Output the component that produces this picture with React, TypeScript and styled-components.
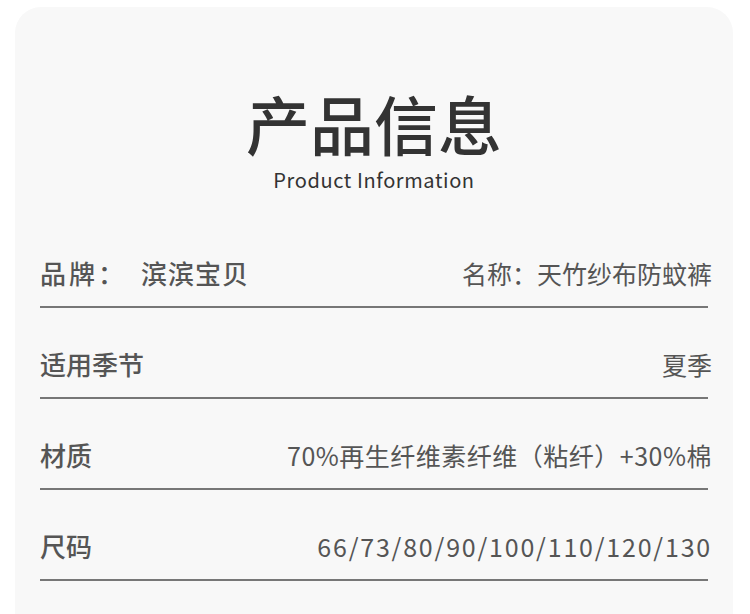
import { createGlobalStyle, styled } from "styled-components"

const Global = createGlobalStyle`
  html, body {
    margin: 0;
    padding: 0;
    background: #fff;
    overflow: hidden;
  }
  body {
    font-family: "Noto Sans CJK SC", "Noto Sans", sans-serif;
  }
`

const rows = [
  { label: "品牌：", brand: "滨滨宝贝", value: "名称：天竹纱布防蚊裤", spacing: 0 },
  { label: "适用季节", value: "夏季", spacing: 0 },
  { label: "材质", value: "70%再生纤维素纤维（粘纤）+30%棉", spacing: 0.5 },
  { label: "尺码", value: "66/73/80/90/100/110/120/130", spacing: 1.8 },
]

const App = () => {
  return (
    <Page>
      <Global />
      <Card>
        <Header>
          <Title>产品信息</Title>
          <Subtitle>Product Information</Subtitle>
        </Header>
        <List>
          {rows.map((r) => (
            <Row key={r.label}>
              <Label $wide={!!r.brand}>
                {r.label}
                {r.brand && <Brand>{r.brand}</Brand>}
              </Label>
              <Value $spacing={r.spacing}>{r.value}</Value>
            </Row>
          ))}
        </List>
      </Card>
    </Page>
  )
}
export default App

const Page = styled.div`
  padding: 7px 17px 0 15px;
`

const Card = styled.div`
  background: #f8f8f8;
  border-radius: 26px;
  height: 660px;
  padding: 0 25px;
`

const Header = styled.div`
  display: flex;
  flex-direction: column;
  align-items: center;
  padding-top: 74px;
`

const Title = styled.div`
  font-size: 64px;
  font-weight: 500;
  line-height: 82px;
  color: #333;
`

const Subtitle = styled.div`
  font-size: 20px;
  font-weight: 400;
  line-height: 28px;
  margin-top: 3px;
  letter-spacing: 0.6px;
  color: #333;
`

const List = styled.div`
  display: flex;
  flex-direction: column;
  margin-top: 23px;
`

const Row = styled.div`
  height: 91px;
  display: flex;
  align-items: flex-end;
  justify-content: space-between;
  box-sizing: border-box;
  padding-bottom: 15px;
  border-bottom: 2px solid #777;
`

const Label = styled.div<{ $wide?: boolean }>`
  font-size: 26px;
  font-weight: 500;
  line-height: 36px;
  color: #555;
  letter-spacing: ${(p) => (p.$wide ? "3px" : "0")};
`

const Brand = styled.span`
  margin-left: 14px;
  letter-spacing: 1px;
`

const Value = styled.div<{ $spacing: number }>`
  font-size: 25px;
  line-height: 36px;
  color: #555;
  margin-right: -4px;
  letter-spacing: ${(p) => p.$spacing}px;
`
